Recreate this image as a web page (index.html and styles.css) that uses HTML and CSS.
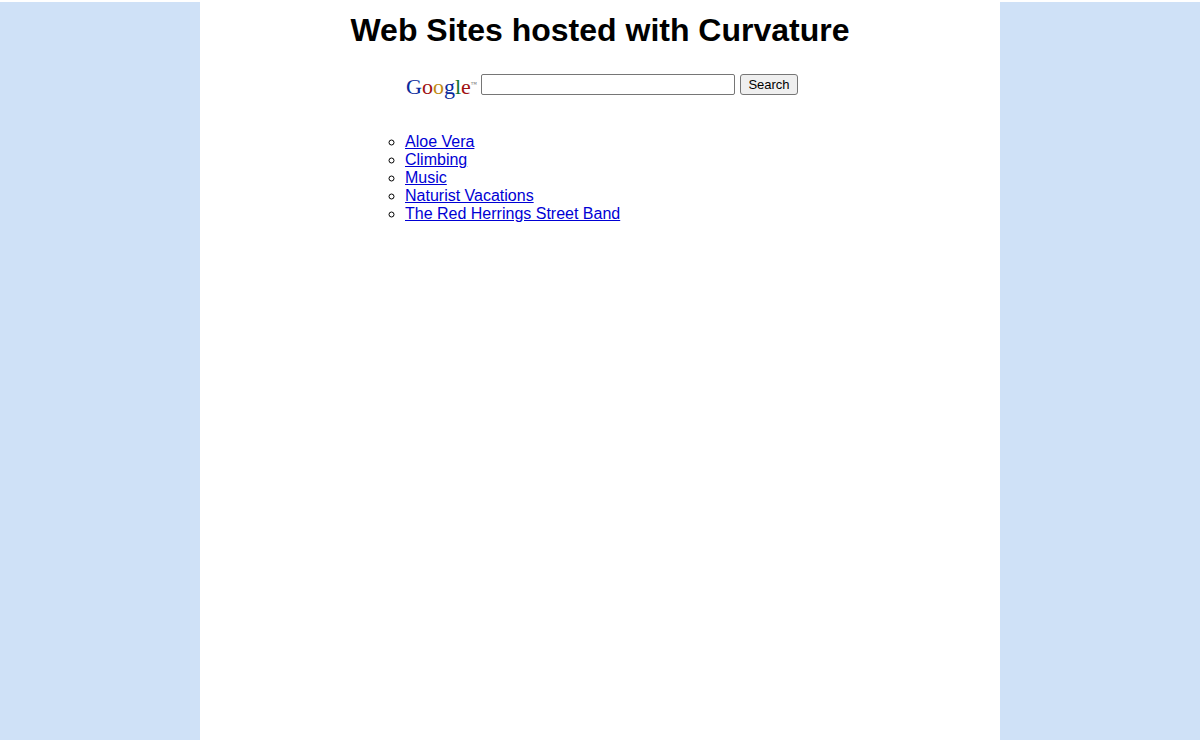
FILE: index.html
```html
<!DOCTYPE html>
<html lang="en">
<head>
<meta charset="utf-8">
<title>Web Sites hosted with Curvature</title>
<link rel="stylesheet" href="styles.css">
</head>
<body>
<main class="page">
  <h1 class="title">Web Sites hosted with Curvature</h1>
  <form class="search" role="search">
    <div class="logo" role="img" aria-label="Google"><span class="blue">G</span><span class="red">o</span><span class="gold">o</span><span class="blue">g</span><span class="green">l</span><span class="red">e</span><span class="tm">™</span></div>
    <input class="query" type="text" aria-label="Search terms">
    <button class="submit" type="submit">Search</button>
  </form>
  <ul class="sites">
    <li><a href="#">Aloe Vera</a></li>
    <li><a href="#">Climbing</a></li>
    <li><a href="#">Music</a></li>
    <li><a href="#">Naturist Vacations</a></li>
    <li><a href="#">The Red Herrings Street Band</a></li>
  </ul>
</main>
</body>
</html>
```
FILE: styles.css
```css
* {
  box-sizing: border-box;
}

body {
  margin: 0;
  padding-top: 2px;
  min-height: 100vh;
  display: flex;
  justify-content: center;
  background: linear-gradient(#fff 2px, #cfe1f7 2px);
  font-family: "Liberation Sans", Arial, sans-serif;
  font-size: 16px;
  color: #000;
}

.page {
  width: 100%;
  max-width: 800px;
  background: #fff;
}

.title {
  margin: 10px 0 25px;
  font-size: 32px;
  line-height: 37px;
  text-align: center;
}

.search {
  display: flex;
  justify-content: center;
  align-items: flex-start;
  gap: 5px;
  padding-left: 3px;
}

.logo {
  display: flex;
  align-items: baseline;
  width: 71px;
  height: 30px;
  padding-left: 1px;
  font-family: "Liberation Serif", serif;
  font-size: 22px;
  line-height: 26px;
}

.blue {
  color: #0a2a9c;
}

.red {
  color: #a01010;
}

.gold {
  color: #c08a10;
}

.green {
  color: #107030;
}

.tm {
  align-self: flex-start;
  padding-top: 7px;
  font-size: 6px;
  line-height: 6px;
  color: #666;
}

.query {
  width: 254px;
  height: 21px;
  padding: 1px 2px;
  border: 1px solid #767676;
  border-radius: 2px;
  background: #fff;
}

.submit {
  width: 58px;
  height: 21px;
  padding: 0 7px;
  border: 1px solid #767676;
  border-radius: 3px;
  background: #efefef;
  font-family: inherit;
  font-size: 13px;
  line-height: 15px;
  color: #000;
}

.sites {
  width: 430px;
  max-width: 100%;
  margin: 29px auto 0;
  padding-left: 20px;
  list-style: circle;
  line-height: 18px;
}

.sites a {
  color: #0000d4;
}
```
